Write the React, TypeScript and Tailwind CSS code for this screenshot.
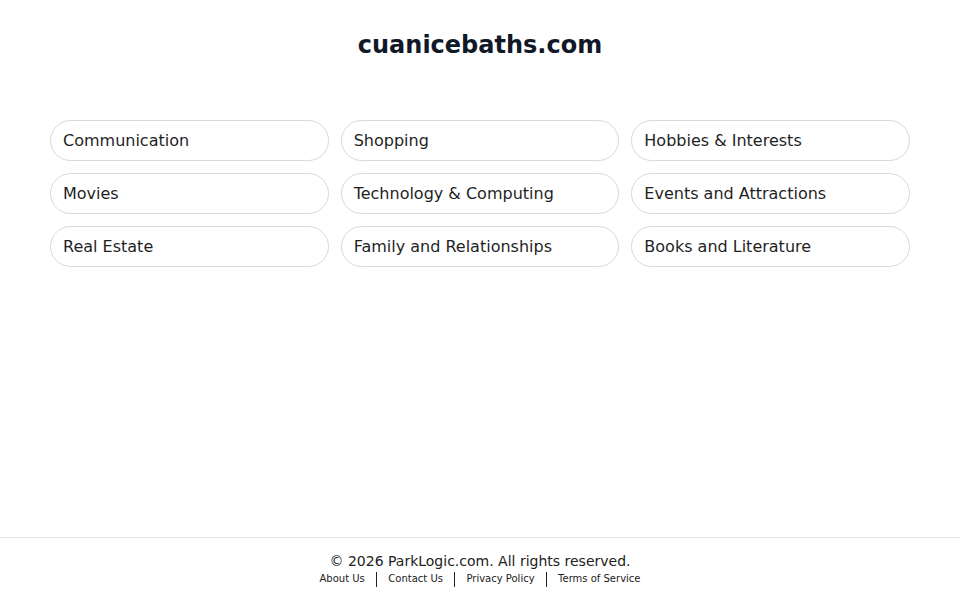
import React from 'react';

const categories = [
  'Communication',
  'Shopping',
  'Hobbies & Interests',
  'Movies',
  'Technology & Computing',
  'Events and Attractions',
  'Real Estate',
  'Family and Relationships',
  'Books and Literature',
];

const links = ['About Us', 'Contact Us', 'Privacy Policy', 'Terms of Service'];

const App: React.FC = () => {
  return (
    <div
      className="min-h-screen flex flex-col bg-white text-[#111827]"
      style={{ fontFamily: '"DejaVu Sans", sans-serif' }}
    >
      <main className="flex-1">
        <h1 className="pt-[30px] text-center text-[24px] leading-[30px] font-bold text-[#111827]">
          cuanicebaths.com
        </h1>

        <div className="mt-[60px] mx-[50px] grid grid-cols-3 gap-x-[12px] gap-y-[12px]">
          {categories.map((c) => (
            <a
              key={c}
              href="#"
              className="h-[41px] flex items-center px-[12px] rounded-full border border-[#d9d9d9] text-[16px] text-[#1f1f1f]"
            >
              {c}
            </a>
          ))}
        </div>
      </main>

      {/* Footer */}
      <footer className="h-[63px] border-t border-[#e5e5e5] flex flex-col items-center pt-[14px]">
        <p className="text-[14px] leading-[18px] text-[#222]">
          © 2026 ParkLogic.com. All rights reserved.
        </p>
        <div className="mt-[1px] flex items-center text-[10px] leading-[16px] text-[#222]">
          {links.map((l, i) => (
            <React.Fragment key={l}>
              {i > 0 && <span className="mx-[11px] w-[1.5px] h-[15px] bg-[#222]" />}
              <a href="#">{l}</a>
            </React.Fragment>
          ))}
        </div>
      </footer>
    </div>
  );
};

export default App;
